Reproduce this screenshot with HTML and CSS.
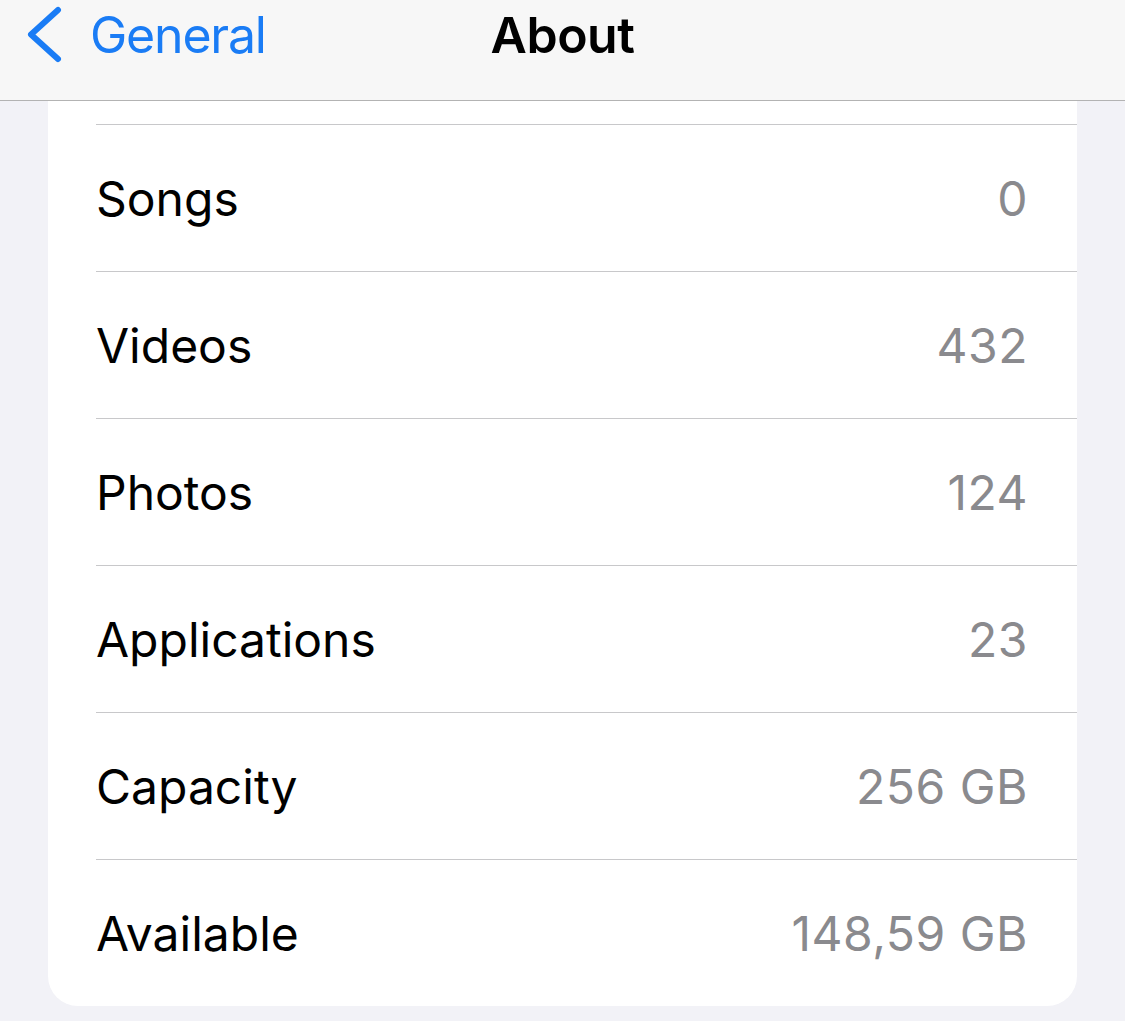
FILE: index.html
```html
<!DOCTYPE html>
<html>
<head>
    <meta charset="utf-8">
    <title>About</title>
    <link rel="stylesheet" href="styles.css">
</head>
<body>
    <div class="navbar">
        <div class="back">
            <svg class="chevron" width="40" height="60" viewBox="0 0 40 60">
                <polyline points="36,5 9,29.5 36,54" fill="none" stroke="#1a7cf5" stroke-width="6" stroke-linecap="round" stroke-linejoin="round"/>
            </svg>
            <span class="back-label">General</span>
        </div>
        <div class="title">About</div>
    </div>

    <div class="content">
        <div class="card">
            <div class="stub"></div>
            <div class="row"><span class="label">Songs</span><span class="value">0</span></div>
            <div class="row"><span class="label">Videos</span><span class="value">432</span></div>
            <div class="row"><span class="label">Photos</span><span class="value">124</span></div>
            <div class="row"><span class="label">Applications</span><span class="value">23</span></div>
            <div class="row"><span class="label">Capacity</span><span class="value">256 GB</span></div>
            <div class="row"><span class="label">Available</span><span class="value">148,59 GB</span></div>
        </div>
    </div>
</body>
</html>
```

FILE: styles.css
```css
body {
    margin: 0;
    background-color: #f2f2f7;
    font-family: Inter, "Noto Sans", sans-serif;
    height: 1021px;
    overflow: hidden;
}
.navbar {
    position: relative;
    height: 100px;
    background-color: #f7f7f7;
    border-bottom: 1px solid #b3b3b3;
}
.back {
    display: flex;
    align-items: center;
    height: 70px;
    padding-left: 22px;
}
.chevron {
    display: block;
}
.back-label {
    color: #1a7cf5;
    font-size: 50px;
    margin-left: 28px;
    letter-spacing: -1.2px;
}
.title {
    position: absolute;
    top: 0;
    left: 0;
    right: 0;
    height: 70px;
    line-height: 70px;
    text-align: center;
    font-size: 50px;
    font-weight: 600;
    color: #000;
    letter-spacing: -0.5px;
}
.content {
    padding: 0 48px;
}
.card {
    background-color: #fff;
    border-radius: 0 0 30px 30px;
}
.stub {
    height: 23px;
}
.row {
    display: flex;
    justify-content: space-between;
    align-items: center;
    height: 146px;
    margin-left: 48px;
    padding-right: 49px;
    border-top: 1px solid #c8c8ca;
    font-size: 48px;
}
.label {
    color: #000;
}
.value {
    color: #8a8a8e;
    letter-spacing: 0.5px;
}
```
